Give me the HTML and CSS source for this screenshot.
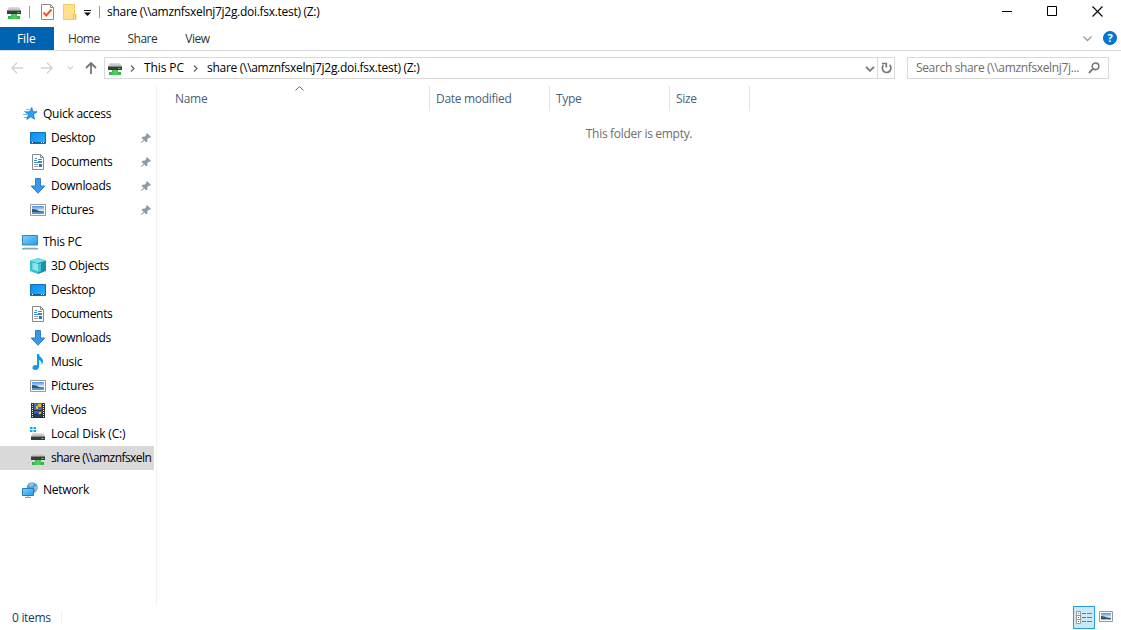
FILE: index.html
```html
<!DOCTYPE html>
<html lang="en">
  <head>
    <meta charset="UTF-8">
    <title>share (\\amznfsxelnj7j2g.doi.fsx.test) (Z:)</title>
    <link rel="stylesheet" href="styles.css">
  </head>
  <body>
    <!-- Shared icons -->
    <svg class="sprite">
      <defs>
        <linearGradient id="sky" x1="0" y1="0" x2="1" y2="1">
          <stop offset="0" stop-color="#0b8cf0"/>
          <stop offset="1" stop-color="#2cb0ff"/>
        </linearGradient>
        <linearGradient id="photo" x1="0" y1="0" x2="0" y2="1">
          <stop offset="0" stop-color="#4a90e8"/>
          <stop offset="0.6" stop-color="#e4f3fb"/>
          <stop offset="1" stop-color="#7fa9c6"/>
        </linearGradient>
        <linearGradient id="screen" x1="0" y1="0" x2="1" y2="1">
          <stop offset="0" stop-color="#7fd0fb"/>
          <stop offset="1" stop-color="#259de8"/>
        </linearGradient>
        <linearGradient id="metal" x1="0" y1="0" x2="0" y2="1">
          <stop offset="0" stop-color="#e2e2e2"/>
          <stop offset="1" stop-color="#b4b4b4"/>
        </linearGradient>
        <linearGradient id="leg" x1="0" y1="0" x2="1" y2="0">
          <stop offset="0" stop-color="#2fae45"/>
          <stop offset="0.5" stop-color="#55cf62"/>
          <stop offset="1" stop-color="#2fae45"/>
        </linearGradient>
      </defs>
      <symbol id="netdrive" viewBox="0 0 16 16">
        <path d="M3 3h10l2 3.500H1z" fill="url(#metal)"/>
        <path d="M1 6.500h14V10H1z" fill="#3b3b3b"/>
        <path d="M11.500 8h2v1h-2z" fill="#4fe04f"/>
        <path d="M5 10h6v2h3v3H2v-3h3z" fill="url(#leg)"/>
      </symbol>
      <symbol id="star" viewBox="0 0 16 16">
        <path d="M9.800 1.500l1 4.200 4.200.1-3.500 2.700 1 4.700-3.700-2.500-4 2.700 1.500-4.600L3.500 6l4.200-.3z" fill="#2ba0f4" stroke="#1479c9" stroke-width=".8"/>
        <path d="M4 3.500h3.500M2 5.500h3M1 8.500h4M2 11.500h3" stroke="#5bb8f5" stroke-width="1"/>
      </symbol>
      <symbol id="desktop" viewBox="0 0 16 16">
        <path d="M.5 2.500h15v11H.5z" fill="url(#sky)" stroke="#0870b8"/>
        <path d="M1 12h14v1H1z" fill="#075d9b"/>
        <path d="M2 12h1v1H2zM11 12h1v1h-1zM13 12h1v1h-1z" fill="#fff"/>
      </symbol>
      <symbol id="document" viewBox="0 0 16 16">
        <path d="M2.500.5h8l3 3v12h-11z" fill="#fff" stroke="#8a8a8a"/>
        <path d="M10.500.5v3h3" fill="none" stroke="#8a8a8a"/>
        <path d="M4 6.500h3M5 4.500h2M8 5.500h4M8 7.500h4M4 8.500h8" stroke="#2e8ccf"/>
        <path d="M4 10.500h4M4 12.500h4" stroke="#9b9b9b"/>
        <path d="M9 10h3v3H9z" fill="#36769e"/>
      </symbol>
      <symbol id="download" viewBox="0 0 16 16">
        <path d="M5.500.5h5v7.500h4.300L8 15.300 1.200 8h4.300z" fill="#3897e6" stroke="#2778ba" stroke-width=".9"/>
      </symbol>
      <symbol id="picture" viewBox="0 0 16 16">
        <path d="M.5 2.500h15v11H.5z" fill="#fff" stroke="#9a9a9a"/>
        <path d="M2 4h12v8H2z" fill="url(#photo)"/>
        <path d="M2 7q5 0 7 2l5 .5V11H2z" fill="#315b5c"/>
        <path d="M2 10h12v2H2z" fill="#5c96bd"/>
      </symbol>
      <symbol id="pc" viewBox="0 0 16 16">
        <path d="M.5 1.500h15v9.500H.5z" fill="url(#screen)" stroke="#3388bb"/>
        <path d="M0 14h16v1.500H0z" fill="#8ba4b5"/>
        <path d="M2 13.500h12" stroke="#dbe6ed"/>
      </symbol>
      <symbol id="cube" viewBox="0 0 16 16">
        <path d="M0 2.500L8 0v16l-8-3z" fill="#35bdd0"/>
        <path d="M16 2.500L8 0v16l8-3z" fill="#1497ad"/>
        <path d="M0 2.500L8 0l8 2.500L8 5z" fill="#7fdde8"/>
        <path d="M2.500 4.500L8 6v7.500l-5.500-2z" fill="#8fe3ec"/>
        <path d="M8 6l3-1v8l-3 1.500z" fill="#48c6d8"/>
      </symbol>
      <symbol id="music" viewBox="0 0 16 16">
        <path d="M7 0h2c.3 3 4 3.700 4 7.300 0 1.500-.6 2.700-1.500 3.700.7-3-.5-4.300-2.500-5v6.500C9 14.500 7.500 16 5.500 16S2.500 15 2.500 13.700C2.500 12 4 11 5.500 11c.6 0 1 .1 1.500.3z" fill="#0b9bef"/>
      </symbol>
      <symbol id="video" viewBox="0 0 16 16">
        <path d="M1 1h14v15H1z" fill="#303030"/>
        <path d="M4 1h8v7H4z" fill="#3472c7"/>
        <path d="M4 9h8v6H4z" fill="#3168b8"/>
        <path d="M8 2h3v3H8zM6 4h2v3H6z" fill="#e9b645"/>
        <path d="M4 12l3-1 2 2 3-2v4H4z" fill="#243a57"/>
        <path d="M9 10h2v2H9z" fill="#e9b645"/>
        <path d="M2.500 2v13M13.500 2v13" stroke="#eee" stroke-dasharray="1 1"/>
      </symbol>
      <symbol id="disk" viewBox="0 0 16 16">
        <path d="M0 1h2.500v2H0zM3.500 1H6v2H3.500zM0 4h2.500v2H0zM3.500 4H6v2H3.500z" fill="#08aef0"/>
        <path d="M3 7h10l2 3.500H1z" fill="url(#metal)"/>
        <path d="M1 10.500h14V14H1z" fill="#3b3b3b"/>
        <path d="M11.500 12h2v1h-2z" fill="#61df61"/>
      </symbol>
      <symbol id="network" viewBox="0 0 16 16">
        <circle cx="10.300" cy="5.700" r="5.500" fill="#579dcc"/>
        <path d="M7 2.500Q9 0 12 1l-1 3-3 1zM12 5l3-1 .5 3-2 3z" fill="#8fc4e2"/>
        <path d="M.5 6.500h11v7H.5z" fill="url(#screen)" stroke="#257db9"/>
        <path d="M3 15.500h6M6 14v1" stroke="#6ba7ca"/>
      </symbol>
      <symbol id="pin" viewBox="0 0 10 10">
        <path d="M6 0l4 4-1 .8-.9-.2-1.900 2 .1 2-1 .8-2-2L.5 10H0v-.5l2.600-2.800-2-2 .8-1 2 .1 2-1.900L5.200 1z" fill="#8e9aa3"/>
      </symbol>
    </svg>

    <div class="titlebar">
      <svg class="icon"><use href="#netdrive"/></svg>
      <span class="divider"></span>
      <svg class="check" width="13" height="16">
        <path d="M.5.5h9l3 3v12H.5z" fill="#fff" stroke="#8b8b8b"/>
        <path d="M9.500.5v3h3" fill="none" stroke="#8b8b8b"/>
        <path d="M2.500 8.500L5.300 11.500 10.500 5.500" fill="none" stroke="#f05a22" stroke-width="2"/>
      </svg>
      <svg class="folder" width="14" height="16">
        <path d="M.5.5h11v10h1.500v5H.5z" fill="#ffe18c" stroke="#f1cc62"/>
        <path d="M10.500 15v-4.500h2V15" fill="#ffe99f" stroke="#e7be50"/>
      </svg>
      <svg class="customize" width="7" height="6">
        <path d="M0 0h7v1H0zM0 2.500h7L3.500 6z" fill="#111"/>
      </svg>
      <span class="divider divider-last"></span>
      <span class="title">share (\\amznfsxelnj7j2g.doi.fsx.test) (Z:)</span>
      <div class="window-buttons">
        <svg width="11" height="11"><path d="M0 5.500h10" stroke="#000"/></svg>
        <svg width="11" height="11"><path d="M.5.500h9v9h-9z" fill="none" stroke="#000"/></svg>
        <svg width="11" height="11"><path d="M.5.500l10 10M10.500.500l-10 10" stroke="#000" stroke-width="1.100"/></svg>
      </div>
    </div>

    <div class="tabs">
      <span class="tab tab-file">File</span>
      <span class="tab">Home</span>
      <span class="tab tab-wide">Share</span>
      <span class="tab tab-wide">View</span>
      <svg class="expand" width="9" height="6"><path d="M.5.500l4 4 4-4" fill="none" stroke="#999" stroke-width="1.300"/></svg>
      <svg class="help" width="14" height="14">
        <circle cx="7" cy="7" r="6.600" fill="#0078d7" stroke="#0063b1" stroke-width=".8"/>
        <text x="7" y="11" class="help-mark">?</text>
      </svg>
    </div>

    <div class="navbar">
      <svg class="nav-arrows" width="88" height="12">
        <path d="M12 6H.8M6 .8L.8 6 6 11.200M30 6h11.200M36 .8L41.200 6 36 11.200" fill="none" stroke="#d2d2d2" stroke-width="1.300"/>
        <path d="M56.500 4.500L59.300 7l2.800-2.500" fill="none" stroke="#d2d2d2" stroke-width="1.300"/>
        <path d="M80 12V1M75 6l5-5 5 5" fill="none" stroke="#777" stroke-width="1.800"/>
      </svg>
      <div class="address">
        <svg class="icon"><use href="#netdrive"/></svg>
        <svg class="crumb-arrow" width="5" height="7"><path d="M1 .5l3 3-3 3" fill="none" stroke="#666" stroke-width="1.300"/></svg>
        <span class="crumb-pc">This PC</span>
        <svg class="crumb-arrow" width="5" height="7"><path d="M1 .5l3 3-3 3" fill="none" stroke="#666" stroke-width="1.300"/></svg>
        <span class="title">share (\\amznfsxelnj7j2g.doi.fsx.test) (Z:)</span>
        <svg class="history" width="10" height="6"><path d="M1 .8l4 4 4-4" fill="none" stroke="#777" stroke-width="1.800"/></svg>
        <span class="refresh">
          <svg width="11" height="12"><path d="M2.500 3.200A4.300 4.300 0 1 0 8.500 3M1 1.500h4.300V5.500" fill="none" stroke="#777" stroke-width="1.700"/></svg>
        </span>
      </div>
      <div class="search">
        <span>Search share (\\amznfsxelnj7j...</span>
        <svg width="12" height="12"><circle cx="7.500" cy="4.300" r="3.300" fill="none" stroke="#777" stroke-width="1.600"/><path d="M5.200 6.700L.8 11" stroke="#777" stroke-width="1.800"/></svg>
      </div>
    </div>

    <div class="content">
      <div class="sidebar">
        <div class="item root"><svg class="icon"><use href="#star"/></svg><span>Quick access</span></div>
        <div class="item"><svg class="icon"><use href="#desktop"/></svg><span>Desktop</span><svg class="pin"><use href="#pin"/></svg></div>
        <div class="item"><svg class="icon"><use href="#document"/></svg><span>Documents</span><svg class="pin"><use href="#pin"/></svg></div>
        <div class="item"><svg class="icon"><use href="#download"/></svg><span>Downloads</span><svg class="pin"><use href="#pin"/></svg></div>
        <div class="item"><svg class="icon"><use href="#picture"/></svg><span>Pictures</span><svg class="pin"><use href="#pin"/></svg></div>

        <div class="item root group"><svg class="icon"><use href="#pc"/></svg><span>This PC</span></div>
        <div class="item"><svg class="icon"><use href="#cube"/></svg><span>3D Objects</span></div>
        <div class="item"><svg class="icon"><use href="#desktop"/></svg><span>Desktop</span></div>
        <div class="item"><svg class="icon"><use href="#document"/></svg><span>Documents</span></div>
        <div class="item"><svg class="icon"><use href="#download"/></svg><span>Downloads</span></div>
        <div class="item"><svg class="icon"><use href="#music"/></svg><span>Music</span></div>
        <div class="item"><svg class="icon"><use href="#picture"/></svg><span>Pictures</span></div>
        <div class="item"><svg class="icon"><use href="#video"/></svg><span>Videos</span></div>
        <div class="item"><svg class="icon"><use href="#disk"/></svg><span class="disk-name">Local Disk (C:)</span></div>
        <div class="item selected"><svg class="icon"><use href="#netdrive"/></svg><span>share (\\amznfsxeln</span></div>

        <div class="item root group"><svg class="icon"><use href="#network"/></svg><span>Network</span></div>
      </div>

      <div class="files">
        <div class="columns">
          <span class="column column-name">Name
            <svg class="sort" width="9" height="5"><path d="M.5 4.500l4-4 4 4" fill="none" stroke="#666"/></svg>
          </span>
          <span class="column column-date">Date modified</span>
          <span class="column column-type">Type</span>
          <span class="column column-size">Size</span>
        </div>
        <p class="empty">This folder is empty.</p>
      </div>
    </div>

    <div class="statusbar">
      <span class="count">0 items</span>
      <span class="view-button active">
        <svg width="16" height="14">
          <path d="M.5.500h4v12h-4zM.5 4.500h4M.5 8.500h4" fill="#fff" stroke="#999"/>
          <path d="M2 2h1v1H2z" fill="#36a35a"/><path d="M2 6h1v1H2z" fill="#2a8dd4"/><path d="M2 10h1v1H2z" fill="#c33"/>
          <path d="M6 2.500h4M11 2.500h5M6 6.500h4M11 6.500h5M6 10.500h4M11 10.500h5" stroke="#777"/>
        </svg>
      </span>
      <svg class="thumb-view" width="14" height="11">
        <path d="M.5.500h13v10H.5z" fill="#fff" stroke="#999"/>
        <path d="M2 2h10v7H2z" fill="url(#photo)"/>
        <path d="M2 5q4 0 6 1.500l4 .5v1H2z" fill="#315b5c"/>
      </svg>
    </div>
  </body>
</html>
```
FILE: styles.css
```css
* {
  box-sizing: border-box;
}

body {
  margin: 0;
  height: 630px;
  display: flex;
  flex-direction: column;
  overflow: hidden;
  background: #fff;
  color: #000;
  font-family: "Open Sans", "Noto Sans", sans-serif;
  font-size: 12px;
  line-height: 16px;
  letter-spacing: -0.3px;
  white-space: nowrap;
}

svg {
  display: block;
  flex: none;
}

.sprite {
  position: absolute;
  width: 0;
  height: 0;
}

.icon {
  width: 16px;
  height: 16px;
}

.title {
  letter-spacing: -0.29px;
}

/* Title bar */
.titlebar {
  display: flex;
  align-items: center;
  height: 27px;
  padding: 0 18px 3px 6px;
}

.titlebar .icon {
  margin-bottom: 1px;
}

.divider {
  width: 1px;
  height: 12px;
  margin: 0 11px 0 7px;
  background: #999;
}

.folder {
  margin-left: 9px;
}

.customize {
  margin: 2px 0 0 7px;
}

.divider-last {
  margin: 0 7px 0 8px;
}

.window-buttons {
  display: flex;
  gap: 34px;
  margin: -2px 0 0 auto;
}

/* Ribbon tabs */
.tabs {
  display: flex;
  height: 24px;
  border-bottom: 1px solid #dadbdc;
  color: #333;
}

.tab {
  padding: 4px 0 0 14px;
  letter-spacing: -0.6px;
}

.tab-file {
  width: 54px;
  padding-left: 17px;
  background: #0063b1;
  color: #fff;
  letter-spacing: -0.1px;
}

.tab-wide {
  padding-left: 28px;
  letter-spacing: -0.5px;
}

.expand {
  margin: 9px 11px 0 auto;
}

.help {
  margin: 4px 4px 0 0;
}

.help-mark {
  fill: #fff;
  font-size: 11px;
  font-weight: bold;
  text-anchor: middle;
}

/* Address bar and search */
.navbar {
  display: flex;
  height: 35px;
  padding: 6px 12px 0 11px;
}

.nav-arrows {
  margin-top: 5px;
}

.address {
  display: flex;
  align-items: center;
  width: 791px;
  height: 22px;
  margin: 0 12px 0 5px;
  padding-left: 2px;
  border: 1px solid #d9d9d9;
}

.crumb-arrow {
  margin: 0 9px 0 7px;
}

.crumb-pc {
  width: 42px;
  letter-spacing: -0.1px;
}

.history {
  margin: 2px 2px 0 auto;
}

.refresh {
  width: 17px;
  height: 20px;
  padding: 4px 0 0 3px;
  border-left: 1px solid #d9d9d9;
}

.search {
  display: flex;
  align-items: center;
  justify-content: space-between;
  width: 202px;
  height: 22px;
  padding: 0 8px;
  border: 1px solid #d9d9d9;
  color: #6d6d6d;
  letter-spacing: -0.35px;
}

/* Navigation pane */
.content {
  display: flex;
  flex: 1;
}

.sidebar {
  width: 157px;
  padding: 16px 2px 0 0;
  border-right: 1px solid #f2f2f2;
}

.item {
  display: flex;
  align-items: center;
  height: 24px;
  padding-left: 30px;
  overflow: hidden;
}

.item .icon {
  margin-right: 5px;
}

.root {
  padding-left: 22px;
  letter-spacing: -0.25px;
}

.group {
  margin-top: 8px;
}

.disk-name {
  letter-spacing: -0.15px;
}

.selected {
  background: #d9d9d9;
  letter-spacing: -0.55px;
}

.pin {
  width: 10px;
  height: 10px;
  margin: 0 3px 0 auto;
}

/* File list */
.files {
  flex: 1;
}

.columns {
  display: flex;
  height: 25px;
  color: #4c607a;
}

.column {
  position: relative;
  padding: 5px 0 0 6px;
  border-right: 1px solid #e5e5e5;
}

.column-name {
  width: 273px;
  padding-left: 18px;
}

.column-date,
.column-type {
  width: 120px;
}

.column-size {
  width: 80px;
}

.sort {
  position: absolute;
  top: 0;
  left: 138px;
}

.empty {
  margin: 15px 0 0;
  text-align: center;
  color: #6d6d6d;
}

/* Status bar */
.statusbar {
  display: flex;
  align-items: center;
  height: 24px;
  padding: 0 8px 1px 12px;
  color: #1e395b;
}

.count {
  height: 11px;
  line-height: 12px;
  padding-right: 10px;
  border-right: 1px solid #f0f0f0;
}

.view-button {
  display: flex;
  align-items: center;
  justify-content: center;
  width: 22px;
  height: 23px;
  margin-left: auto;
}

.active {
  border: 1px solid #26a0da;
  background: #cbe8f6;
}

.thumb-view {
  margin: 0 0 3px 4px;
}
```
